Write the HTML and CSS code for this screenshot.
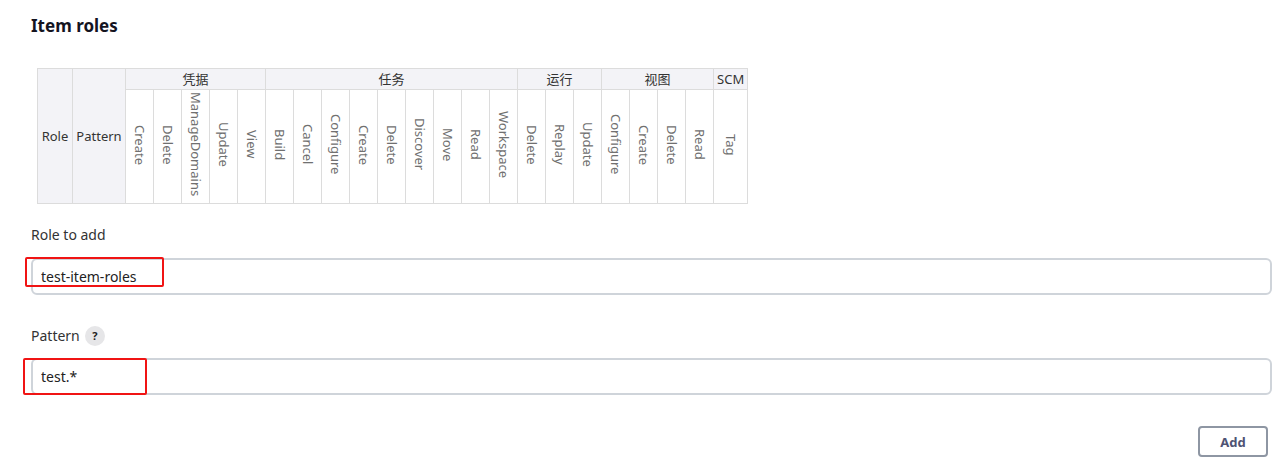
FILE: index.html
```html
<!DOCTYPE html>
<html lang="zh">
<head>
<meta charset="utf-8">
<title>Item roles</title>
<link rel="stylesheet" href="styles.css">
</head>
<body>
<div class="page">
  <h2 class="title">Item roles</h2>
  <table class="perm-table">
    <colgroup>
      <col class="c-role"><col class="c-pattern">
      <col class="c-p"><col class="c-p"><col class="c-p"><col class="c-p"><col class="c-p">
      <col class="c-p"><col class="c-p"><col class="c-p"><col class="c-p"><col class="c-p"><col class="c-p"><col class="c-p"><col class="c-p"><col class="c-p">
      <col class="c-p"><col class="c-p"><col class="c-p">
      <col class="c-p"><col class="c-p"><col class="c-p"><col class="c-p">
      <col class="c-scm">
    </colgroup>
    <thead>
      <tr class="group-row">
        <th rowspan="2" class="fixed">Role</th>
        <th rowspan="2" class="fixed">Pattern</th>
        <th colspan="5">凭据</th>
        <th colspan="9">任务</th>
        <th colspan="3">运行</th>
        <th colspan="4">视图</th>
        <th>SCM</th>
      </tr>
      <tr class="perm-row">
        <th><span class="vt">Create</span></th>
        <th><span class="vt">Delete</span></th>
        <th><span class="vt">ManageDomains</span></th>
        <th><span class="vt">Update</span></th>
        <th><span class="vt">View</span></th>
        <th><span class="vt">Build</span></th>
        <th><span class="vt">Cancel</span></th>
        <th><span class="vt">Configure</span></th>
        <th><span class="vt">Create</span></th>
        <th><span class="vt">Delete</span></th>
        <th><span class="vt">Discover</span></th>
        <th><span class="vt">Move</span></th>
        <th><span class="vt">Read</span></th>
        <th><span class="vt">Workspace</span></th>
        <th><span class="vt">Delete</span></th>
        <th><span class="vt">Replay</span></th>
        <th><span class="vt">Update</span></th>
        <th><span class="vt">Configure</span></th>
        <th><span class="vt">Create</span></th>
        <th><span class="vt">Delete</span></th>
        <th><span class="vt">Read</span></th>
        <th><span class="vt">Tag</span></th>
      </tr>
    </thead>
  </table>

  <div class="field field-role">
    <label class="label">Role to add</label>
    <div class="input-wrap">
      <input class="input" type="text" value="test-item-roles">
      <span class="mark mark-role"></span>
    </div>
  </div>

  <div class="field field-pattern">
    <label class="label">Pattern <span class="help">?</span></label>
    <div class="input-wrap">
      <input class="input" type="text" value="test.*">
      <span class="mark mark-pattern"></span>
    </div>
  </div>

  <div class="actions">
    <button class="btn" type="button">Add</button>
  </div>
</div>
</body>
</html>
```
FILE: styles.css
```css
* { box-sizing: border-box; }
html, body { margin: 0; padding: 0; background: #fff; }
body {
  font-family: "Noto Sans", "Noto Sans CJK SC", sans-serif;
  color: #333;
  width: 1280px;
  height: 465px;
  overflow: hidden;
}
.page {
  padding: 13px 8px 0 31px;
}
.title {
  margin: 0;
  font-size: 17px;
  line-height: 26px;
  font-weight: 700;
  color: #14141f;
}
.perm-table {
  margin: 29px 0 0 6px;
  border-collapse: collapse;
  table-layout: fixed;
  width: 710px;
  font-size: 13px;
}
.c-role { width: 35px; }
.c-pattern { width: 53px; }
.c-p { width: 28px; }
.c-scm { width: 34px; }
.perm-table th {
  border: 1px solid #dcdcdc;
  font-weight: 400;
  padding: 0;
  color: #333;
}
.group-row th {
  height: 21px;
  background: #f3f3f7;
  line-height: 18px;
}
.perm-row th {
  height: 114px;
  background: #fff;
  vertical-align: middle;
}
.vt {
  writing-mode: vertical-rl;
  display: inline-block;
  color: #707070;
  line-height: 18px;
  font-size: 13px;
}
.field { margin-top: 21px; }
.field-pattern { margin-top: 31px; }
.label {
  display: flex;
  align-items: center;
  gap: 3px;
  font-size: 14px;
  line-height: 20px;
  color: #333;
  margin-bottom: 13px;
}
.help {
  width: 20px;
  height: 20px;
  margin-left: 2px;
  border-radius: 50%;
  background: #e6e6e8;
  color: #222;
  font-size: 11px;
  font-weight: 700;
  display: inline-flex;
  align-items: center;
  justify-content: center;
}
.field-pattern .label { margin-bottom: 12px; }
.input-wrap { position: relative; width: 1241px; }
.input {
  display: block;
  width: 100%;
  height: 37px;
  border: 2px solid #cfd4da;
  border-radius: 6px;
  padding: 0 8px;
  font-family: inherit;
  font-size: 14px;
  color: #222;
  background: #fff;
  outline: none;
}
.mark {
  position: absolute;
  border: 2px solid #f01414;
  border-radius: 2px;
  pointer-events: none;
}
.mark-role { left: -6px; top: -1px; width: 139px; height: 30px; }
.mark-pattern { left: -8px; top: 0; width: 124px; height: 37px; }
.actions {
  display: flex;
  justify-content: flex-end;
  width: 1237px;
  margin-top: 31px;
}
.btn {
  width: 70px;
  height: 31px;
  border: 2px solid #8e96a3;
  border-radius: 4px;
  background: #fff;
  font-family: inherit;
  font-size: 13px;
  font-weight: 700;
  color: #4f5373;
  cursor: pointer;
}
```
